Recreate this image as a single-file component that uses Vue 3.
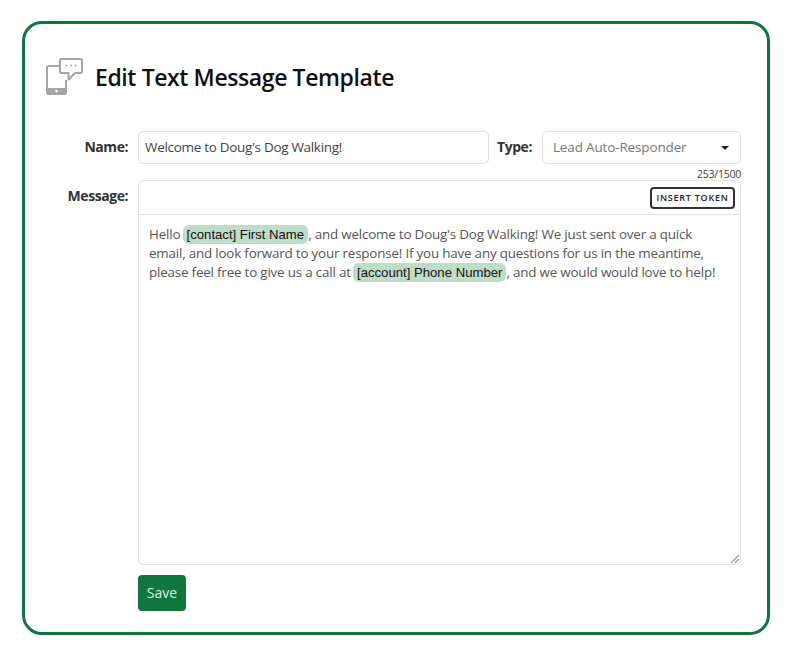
<template>
  <div class="page">
    <section class="card">
      <header class="head">
        <svg class="icon" width="37" height="38" viewBox="0 0 37 38" fill="none" aria-hidden="true">
          <path d="M13 8H2.8C1.8 8 1 8.8 1 9.8V34.2C1 35.2 1.8 36 2.8 36H18.2C19.2 36 20 35.2 20 34.2V22" stroke="#a6a6a6" stroke-width="2"/>
          <path d="M1 30H20V34.5C20 35.3 19.3 36 18.5 36H2.5C1.7 36 1 35.3 1 34.5Z" fill="#a6a6a6"/>
          <circle cx="10.5" cy="33" r="1.3" fill="#fff"/>
          <path d="M15.8 1H34.2C35.2 1 36 1.8 36 2.8V13.2C36 14.2 35.2 15 34.2 15H29L22.5 21.5V15H15.8C14.8 15 14 14.2 14 13.2V2.8C14 1.8 14.8 1 15.8 1Z" fill="#fff" stroke="#a6a6a6" stroke-width="2" stroke-linejoin="round"/>
          <circle cx="20.5" cy="7.5" r="1" fill="#a6a6a6"/>
          <circle cx="25" cy="7.5" r="1" fill="#a6a6a6"/>
          <circle cx="29.5" cy="7.5" r="1" fill="#a6a6a6"/>
        </svg>
        <h1>Edit Text Message Template</h1>
      </header>

      <div class="form">
        <label class="label name-label">Name:</label>
        <div class="top-row">
          <div class="field name-field">Welcome to Doug's Dog Walking!</div>
          <label class="label">Type:</label>
          <div class="field select-field">
            <span>Lead Auto-Responder</span>
            <span class="caret"></span>
          </div>
        </div>

        <label class="label message-label">Message:</label>
        <div class="message-col">
          <div class="counter">253/1500</div>
          <div class="editor">
            <div class="toolbar">
              <button class="token-btn" type="button">INSERT TOKEN</button>
            </div>
            <div class="body">
              <p>Hello <span class="token">[contact] First Name</span>, and welcome to Doug's Dog Walking! We just sent over a quick email, and look forward to your response! If you have any questions for us in the meantime, please feel free to give us a call at <span class="token">[account] Phone Number</span>, and we would would love to help!</p>
              <svg class="grip" width="10" height="10" viewBox="0 0 10 10" aria-hidden="true">
                <path d="M1 9 9 1M5 9 9 5" stroke="#999" stroke-width="1.2"/>
              </svg>
            </div>
          </div>
          <button class="save" type="button">Save</button>
        </div>
      </div>
    </section>
  </div>
</template>

<script setup>
</script>

<style>
html, body { margin: 0; background: #fff; }
</style>

<style scoped>
.page {
  width: 792px;
  height: 657px;
  padding: 21px 22px 22px;
  box-sizing: border-box;
  font-family: "Open Sans", sans-serif;
  color: #222;
  overflow: hidden;
}
.card {
  height: 614px;
  box-sizing: border-box;
  border: 3px solid #10763d;
  border-radius: 20px;
  background: #fff;
  padding: 34px 26px 0 21px;
}
.head {
  display: flex;
  align-items: center;
  gap: 12px;
  height: 38px;
}
.icon { flex: none; }
h1 {
  margin: 0;
  font-size: 23px;
  font-weight: 600;
  line-height: 38px;
  letter-spacing: -0.4px;
  color: #111;
}
.form {
  margin-top: 35px;
  display: grid;
  grid-template-columns: 82px 603px;
  column-gap: 10px;
}
.form > .label { text-align: right; }
.label {
  font-size: 14px;
  font-weight: 700;
  letter-spacing: -0.45px;
  color: #333;
  line-height: 31px;
}
.top-row {
  display: flex;
  gap: 8px;
  height: 33px;
}
.top-row .label { margin-right: 2px; }
.field {
  box-sizing: border-box;
  height: 33px;
  border: 1px solid #e0e0e0;
  border-radius: 5px;
  font-size: 13.5px;
  line-height: 31px;
  padding: 0 6px;
  color: #444;
}
.name-field { width: 351px; flex: none; letter-spacing: -0.31px; }
.select-field {
  flex: 1;
  padding: 0 10px;
  letter-spacing: -0.15px;
  color: #777;
  display: flex;
  align-items: center;
  justify-content: space-between;
}
.caret {
  width: 0;
  height: 0;
  border-left: 4px solid transparent;
  border-right: 4px solid transparent;
  border-top: 4px solid #222;
  margin-right: 1px;
}
.message-label { margin-top: 16px; }
.counter {
  height: 16px;
  font-size: 10.5px;
  letter-spacing: -0.25px;
  line-height: 20px;
  text-align: right;
  color: #444;
}
.editor {
  box-sizing: border-box;
  height: 385px;
  border: 1px solid #e4e4e4;
  border-radius: 5px;
  display: flex;
  flex-direction: column;
}
.toolbar {
  height: 34px;
  flex: none;
  box-sizing: border-box;
  border-bottom: 1px solid #e4e4e4;
  display: flex;
  justify-content: flex-end;
  align-items: flex-start;
  padding: 6px 5px 0 0;
}
.token-btn {
  width: 85px;
  height: 22px;
  box-sizing: border-box;
  border: 2px solid #333;
  border-radius: 4px;
  background: #fff;
  padding: 0 0 1px;
  font-family: "Open Sans", sans-serif;
  font-size: 9px;
  font-weight: 600;
  letter-spacing: 0.75px;
  color: #222;
}
.body {
  flex: 1;
  position: relative;
  padding: 10px 10px 0;
}
.body p {
  margin: 0;
  font-size: 13.4px;
  letter-spacing: -0.19px;
  line-height: 19px;
  color: #555;
}
.token {
  display: inline-block;
  margin-left: -1px;
  font-family: "Liberation Sans", Arial, sans-serif;
  font-size: 13.15px;
  line-height: 19px;
  letter-spacing: 0;
  color: #111;
  background: #bfdcc8;
  border-radius: 6px;
  padding: 0 4px;
}
.grip {
  position: absolute;
  right: 0;
  bottom: 0;
}
.save {
  margin-top: 10px;
  width: 48px;
  height: 36px;
  border: 0;
  border-radius: 4px;
  background: #10763d;
  color: #dcefe3;
  font-family: "Open Sans", sans-serif;
  font-size: 14px;
  padding: 0 0 2px;
  display: block;
}
</style>
